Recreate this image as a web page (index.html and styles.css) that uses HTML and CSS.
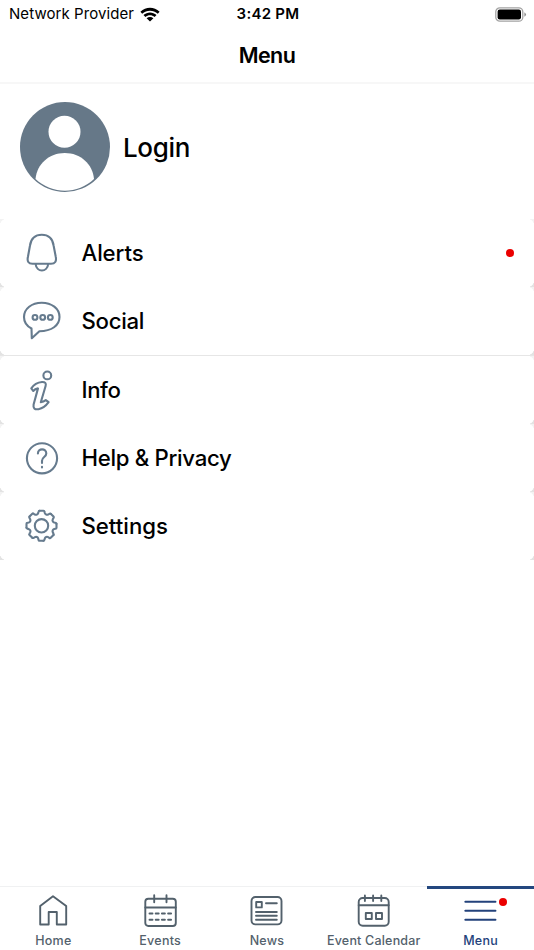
FILE: index.html
```html
<!DOCTYPE html>
<html lang="en">
<head>
<meta charset="utf-8">
<title>Menu</title>
<link rel="stylesheet" href="styles.css">
</head>
<body>
<div class="app">
  <div class="status">
    <div class="carrier"><span class="carrier-name">Network Provider</span>
      <svg class="wifi" viewBox="0 0 20 15"><path d="M.4 4.8C5.9-.5 14.1-.5 19.6 4.8L17.8 6.7C13.3 2.6 6.7 2.6 2.2 6.7ZM3.5 8.1C7.2 4.6 12.8 4.6 16.5 8.1L14.6 10C11.9 7.5 8.1 7.5 5.4 10ZM6.6 11.2C8.6 9.5 11.4 9.5 13.4 11.2L10 14.6Z"/></svg>
    </div>
    <div class="clock">3:42 PM</div>
    <div class="power">
      <svg class="battery" viewBox="0 0 32 15"><rect x=".8" y=".8" width="27" height="13.4" rx="4" fill="none" stroke="#a3a3a3" stroke-width="1.3"/><rect x="2.6" y="2.6" width="23.4" height="9.8" rx="2.2"/><path d="M29.4 5.2q3.2 2.3 0 4.6Z" fill="#8c8c8c"/></svg>
    </div>
  </div>
  <header class="header"><h1 class="title">Menu</h1></header>
  <main class="content">
    <div class="profile">
      <svg class="avatar" viewBox="0 0 90 90"><circle cx="45" cy="45" r="45" fill="#667888"/><circle cx="44.5" cy="29.8" r="16" fill="#fff"/><path d="M15.5 77C17 62 29 51 44.8 51S72.6 62 74 77C58 92.5 32 92.5 15.5 77Z" fill="#fff"/></svg>
      <span class="login">Login</span>
    </div>
    <nav class="list">
      <div class="row"><svg class="icon" viewBox="0 0 48 48"><path d="M23.8 5.8C17.3 5.8 13 9.8 12 16.5L10 27.5C8.8 32.5 10.5 34.8 14.5 34.8H33C37 34.8 38.8 32.5 37.7 27.5L35.6 16.5C34.6 9.8 30.3 5.8 23.8 5.8ZM17.6 35c.8 8.6 11.8 8.6 12.6 0"/></svg><span class="label label-alerts">Alerts</span><i class="dot"></i></div>
      <div class="row row-ruled"><svg class="icon" viewBox="0 0 48 48"><path d="M13.5 31.5C8.6 29 6 24.8 6 20C6 11.6 13.8 5.7 23.7 5.7S41.5 11.6 41.5 20S33.7 34.2 21.4 34.2L13.8 41.2Z"/><circle cx="17" cy="20.4" r="2.4"/><circle cx="24.7" cy="20.4" r="2.4"/><circle cx="32.3" cy="20.4" r="2.4"/></svg><span class="label label-social">Social</span></div>
      <div class="row"><svg class="icon" viewBox="0 0 48 48"><circle cx="29.3" cy="9.4" r="3.9"/><path d="M13.3 22.4C15.5 19 19 16.4 24 16Q28.8 15.8 27.6 20L22.8 36.2Q25.5 36 27.8 34.2L30.6 36.2C28 39.8 24.5 42.5 20.5 43.2Q14.6 44 15.6 38.5L20 22.4Q17 22.8 15.2 25Z"/></svg><span class="label label-info">Info</span></div>
      <div class="row"><svg class="icon" viewBox="0 0 48 48"><circle cx="24" cy="24.3" r="15.1"/><path d="M19.9 19.4C19.9 14 28.3 14 28.3 19.4C28.3 23 24 23 24 26.7V29M24 32.8V33.4"/></svg><span class="label label-help">Help &amp; Privacy</span></div>
      <div class="row"><svg class="icon" viewBox="0 0 48 48"><g transform="translate(23.5 23.8)"><circle r="6.7"/><path id="tooth" d="M-2-15H2Q2.9-15 3-14L3.3-12.7C3.7-11.2 5.3-10.7 6.6-11.3L7.8-12Q8.6-12.5 9.2-12"/><use href="#tooth" transform="rotate(45)"/><use href="#tooth" transform="rotate(90)"/><use href="#tooth" transform="rotate(135)"/><use href="#tooth" transform="rotate(180)"/><use href="#tooth" transform="rotate(225)"/><use href="#tooth" transform="rotate(270)"/><use href="#tooth" transform="rotate(315)"/></g></svg><span class="label label-settings">Settings</span></div>
    </nav>
  </main>
  <nav class="tabs">
    <div class="tab"><svg class="tab-icon" viewBox="0 0 36 36"><path d="M5.2 13L18 3.2L31.2 13V31.5H21.8V19H13.7V31.5H5.2Z"/></svg><span class="tab-label">Home</span></div>
    <div class="tab"><svg class="tab-icon" viewBox="0 0 36 36"><rect x="3.3" y="5.8" width="30.5" height="27.2" rx="3"/><path d="M3.3 14.5H33.8M12.2 2.2V9.2M24.5 2.2V9.2"/><path d="M7.5 20.5H30M7.5 26.7H30" stroke-dasharray="3 3.2"/></svg><span class="tab-label">Events</span></div>
    <div class="tab"><svg class="tab-icon" viewBox="0 0 36 36"><rect x="2.5" y="4" width="30" height="27.4" rx="4"/><rect x="7.2" y="9" width="5.6" height="5.4"/><path d="M17 10.2H27.8M7 19H27.8M7 22.8H27.8M7 26.8H27.8"/></svg><span class="tab-label">News</span></div>
    <div class="tab"><svg class="tab-icon" viewBox="0 0 36 36"><rect x="2.7" y="5" width="30" height="27.7" rx="4"/><path d="M2.7 12.2H32.7M8.9 2.5V8M17.1 2.5V8M25.3 2.5V8"/><rect x="9.8" y="20" width="6" height="6"/><rect x="20" y="20" width="6" height="6"/></svg><span class="tab-label tab-label-wide">Event Calendar</span></div>
    <div class="tab tab-active"><svg class="tab-icon" viewBox="0 0 36 36"><path d="M2.3 8.7H32.5M2.3 17.7H32.5M2.3 26.8H32.5"/></svg><i class="dot dot-tab"></i><span class="tab-label">Menu</span></div>
  </nav>
</div>
</body>
</html>
```
FILE: styles.css
```css
* { box-sizing: border-box; }
body { margin: 0; background: #fff; color: #000; font-family: Inter, "Liberation Sans", sans-serif; }
.app { width: 534px; height: 950px; display: flex; flex-direction: column; overflow: hidden; }
.status { height: 27px; display: grid; grid-template-columns: 1fr auto 1fr; align-items: center; padding: 0 7px 0 9px; font-size: 15px; line-height: 28px; }
.carrier { display: flex; align-items: center; gap: 6px; }
.carrier-name { letter-spacing: .07px; white-space: nowrap; }
.wifi { width: 20px; height: 15px; }
.clock { font-weight: 600; letter-spacing: .27px; }
.power { display: flex; justify-content: flex-end; }
.battery { width: 32px; height: 15px; }
.header { height: 57px; border-bottom: 2px solid #f7f7f7; display: flex; justify-content: center; }
.title { margin: 0; font-size: 21.5px; line-height: 56px; font-weight: 600; letter-spacing: -.6px; }
.content { flex: 1; }
.profile { height: 135px; padding: 18px 20px; display: flex; align-items: flex-start; gap: 13px; }
.avatar { width: 90px; height: 90px; }
.login { font-size: 26px; font-weight: 500; line-height: 91px; letter-spacing: -.35px; }
.row { height: 68.25px; padding: 0 20px 0 18px; display: flex; align-items: center; background: radial-gradient(circle at 7px calc(100% - 7px), transparent 7px, #e3e3e3 7.5px) 0 100% / 7px 7px no-repeat, radial-gradient(circle at 0 0, transparent 7px, #e3e3e3 7.5px) 100% 100% / 7px 7px no-repeat, radial-gradient(circle at 7px 7px, transparent 7px, #f3f3f3 7.5px) 0 0 / 7px 7px no-repeat, radial-gradient(circle at 0 7px, transparent 7px, #f3f3f3 7.5px) 100% 0 / 7px 7px no-repeat; background-position: 0 100%, 100% 100%, 0 0, 100% 0; }
.row-ruled { border-bottom: 1px solid #e6e6e6; }
.icon { width: 48px; height: 48px; fill: none; stroke: #667b8e; stroke-width: 2.1; stroke-linejoin: round; stroke-linecap: round; }
.label { flex: 1; margin-left: 15.5px; font-size: 22.2px; font-weight: 500; line-height: 32px; white-space: nowrap; }
.label-alerts { letter-spacing: -.1px; }
.label-social { letter-spacing: -.3px; }
.label-info { letter-spacing: -.4px; }
.label-help { letter-spacing: -.3px; }
.label-settings { letter-spacing: 0; }
.dot { width: 8px; height: 8px; border-radius: 50%; background: #eb0000; }
.tabs { height: 64px; display: grid; grid-template-columns: repeat(5, 1fr); }
.tab { position: relative; display: flex; flex-direction: column; align-items: center; padding-top: 6px; border-top: 1px solid #f0f1f2; color: #53616c; }
.tab-icon { width: 36px; height: 36px; fill: none; stroke: currentColor; stroke-width: 1.9; stroke-linejoin: round; stroke-linecap: round; }
.tab-label { font-size: 12.5px; font-weight: 500; line-height: 20px; margin-top: 2px; letter-spacing: .25px; white-space: nowrap; }
.tab-label-wide { letter-spacing: .2px; }
.tab-active { padding-top: 4px; border-top: 3px solid #23477f; color: #23427b; }
.dot-tab { position: absolute; top: 9px; right: 27px; }
```
